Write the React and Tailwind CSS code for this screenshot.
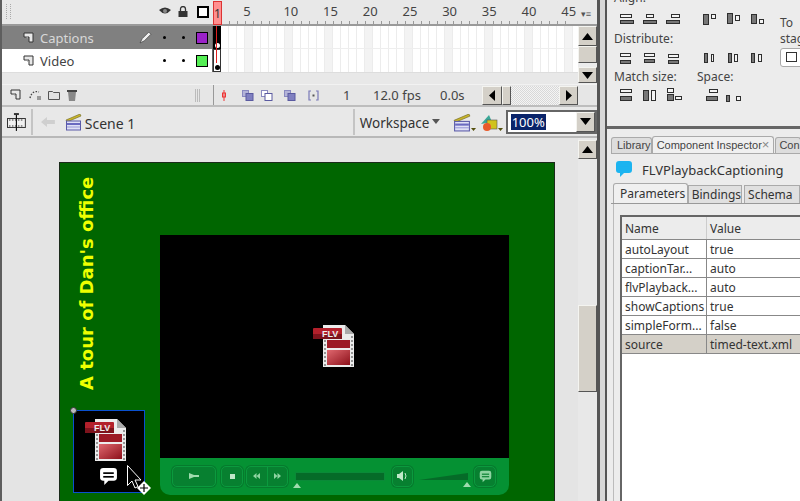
import React from "react";

const font = "font-['Noto_Sans',sans-serif]";

const Layer = () => (
  <svg width="12" height="12" viewBox="0 0 12 12" className="shrink-0">
    <path d="M1 1h9v9H6V5H1z" fill="#e8e8e8" stroke="#333" strokeWidth="1" />
    <path d="M2 4h3v3" fill="#999" />
  </svg>
);

// bevelled win98 style button
const Bevel = ({ className = "", children }) => (
  <div className={`flex items-center justify-center bg-[#d4d0c8] border border-t-[#f4f4f0] border-l-[#f4f4f0] border-r-[#555] border-b-[#555] ${className}`}>
    {children}
  </div>
);

const Tri = ({ dir }) => {
  const d = { up: "M0 7L5.5 0L11 7z", down: "M0 0L11 0L5.5 7z" }[dir];
  if (dir === "left") return <svg width="6" height="11" viewBox="0 0 6 11"><path d="M6 0V11L0 5.5z" fill="#000" /></svg>;
  if (dir === "right") return <svg width="6" height="11" viewBox="0 0 6 11"><path d="M0 0V11L6 5.5z" fill="#000" /></svg>;
  return <svg width="11" height="7" viewBox="0 0 11 7"><path d={d} fill="#000" /></svg>;
};

const Clapper = ({ size = 17 }) => (
  <svg width={size} height={size} viewBox="0 0 17 17">
    <path d="M1 6L15 0l1 2L2 8z" fill="#c9b52a" stroke="#6c6420" strokeWidth=".6" />
    <rect x="1.5" y="7" width="14" height="9" fill="#dfe0f5" stroke="#5a5aa8" />
    <rect x="2" y="9" width="13" height="2" fill="#6a6ac0" />
    <rect x="2" y="12.5" width="13" height="1" fill="#9a9ad8" />
  </svg>
);

const Onion = ({ outline, fill }) => (
  <svg width="12" height="11" viewBox="0 0 12 11">
    <rect x=".5" y=".5" width="6" height="6" fill={fill ? "#b4b4d8" : "#fff"} stroke="#8a8ac0" />
    <rect x="4" y="3.5" width="7" height="7" fill={outline ? "#fff" : "#8080c0"} stroke="#5a5aa0" />
  </svg>
);

// little align glyphs: list of [x, y, w, h, filled]
const Glyph = ({ r, w = 16 }) => (
  <svg width={w} height="14" viewBox={`0 0 ${w} 14`} className="shrink-0">
    {r.map(([x, y, rw, rh, f], i) => (
      <rect key={i} x={x + 0.5} y={y + 0.5} width={rw} height={rh} fill={f ? "#777" : "#f4f4f4"} stroke="#2e2e2e" strokeWidth="1" />
    ))}
  </svg>
);

const alignRows = [
  [
    [[0, 0, 0, 13], [2, 2, 11, 3], [2, 8, 13, 3, 1]],
    [[7, 0, 0, 13], [4, 2, 7, 3], [1, 8, 13, 3, 1]],
    [[15, 0, 0, 13], [5, 2, 8, 3], [0, 8, 13, 3, 1]],
    [[0, 0, 15, 0], [2, 2, 5, 10, 1], [10, 2, 4, 4]],
    [[0, 6, 15, 0], [2, 1, 5, 10, 1], [10, 3, 4, 5]],
    [[0, 13, 15, 0], [2, 2, 5, 9, 1], [10, 7, 4, 4]],
  ],
  [
    [[0, 0, 14, 0], [2, 2, 10, 3], [0, 7, 14, 0], [2, 9, 10, 3, 1]],
    [[2, 2, 10, 3], [0, 6, 14, 0], [2, 8, 10, 3, 1], [0, 12, 14, 0]],
    [[2, 3, 10, 3], [0, 7, 14, 0], [2, 9, 10, 3, 1], [0, 13, 14, 0]],
    [[1, 1, 0, 12], [3, 2, 3, 9, 1], [8, 1, 0, 12], [10, 3, 2, 7]],
    [[3, 2, 3, 9, 1], [7, 1, 0, 12], [9, 3, 3, 7], [13, 1, 0, 12]],
    [[2, 2, 3, 9, 1], [7, 1, 0, 12], [9, 3, 3, 7], [13, 1, 0, 12]],
  ],
  [
    [[0, 0, 0, 13], [15, 0, 0, 13], [2, 1, 11, 3], [2, 8, 11, 4, 1]],
    [[0, 0, 14, 0], [1, 2, 5, 10, 1], [9, 2, 4, 10], [0, 13, 14, 0]],
    [[1, 0, 6, 4], [1, 6, 6, 6, 1], [9, 8, 6, 3]],
    [[0, 5, 15, 0], [7, 1, 8, 3], [4, 8, 11, 4, 1]],
    [[4, 0, 0, 14], [0, 7, 3, 6, 1], [9, 0, 0, 14], [10, 8, 4, 4]],
  ],
];

const FlvIcon = ({ w, h, id }) => (
  <svg width={w} height={h} viewBox="0 0 44 44">
    <defs>
      <linearGradient id={id} x1="0" y1="0" x2="1" y2="1">
        <stop offset="0" stopColor="#e0686f" />
        <stop offset="1" stopColor="#8c101a" />
      </linearGradient>
    </defs>
    <path d="M10 1h22l9 9v33H10z" fill="#ececec" />
    <path d="M32 1v9h9z" fill="#aaa" />
    <rect x="14" y="16" width="23" height="8" fill="#9c1a25" />
    <rect x="14" y="26" width="23" height="15" fill={`url(#${id})`} />
    <path d="M12 12v30M39 12v30" stroke="#777" strokeWidth="1.5" strokeDasharray="2 2" />
    <rect x="0" y="4" width="29" height="11" rx="1" fill="#b3202b" />
    <rect x="0" y="10" width="29" height="5" fill="#7e131c" />
    <text x="9" y="13" fontSize="9" fontWeight="700" fill="#eee" fontFamily="Liberation Sans">FLV</text>
  </svg>
);

const Bubble = ({ w, h, fill, line }) => (
  <svg width={w} height={h} viewBox="0 0 18 18">
    <path d="M4 1h10a3 3 0 0 1 3 3v6a3 3 0 0 1-3 3H9l-4 4v-4H4a3 3 0 0 1-3-3V4a3 3 0 0 1 3-3z" fill={fill} />
    <rect x="4" y="5" width="10" height="1.6" fill={line} />
    <rect x="4" y="8.5" width="10" height="1.6" fill={line} />
  </svg>
);

const CtlBtn = ({ className = "", children }) => (
  <div className={`flex items-center justify-center h-[21px] rounded-[5px] bg-[#078030] border border-[#0b9a3e] shadow-[0_0_0_1px_#067a2d] ${className}`}>
    {children}
  </div>
);

const FrameRow = ({ last }) => (
  <div className={`flex h-[23px] bg-white ${last ? "" : "border-b border-[#eee]"}`}>
    <div className="w-[8px] shrink-0" />
    {Array.from({ length: 45 }).map((_, i) => (
      <div key={i} className={`w-[8px] shrink-0 border-r border-[#ececec] ${(i + 2) % 5 === 0 ? "bg-[#f3f3f3]" : ""}`} />
    ))}
  </div>
);

const Drop = () => (
  <svg width="5" height="3" viewBox="0 0 5 3" className="self-end mb-[1px]"><path d="M0 0h5L2.500 3z" fill="#55500f" /></svg>
);

const rows = [
  ["autoLayout", "true"],
  ["captionTar...", "auto"],
  ["flvPlayback...", "auto"],
  ["showCaptions", "true"],
  ["simpleForm...", "false"],
  ["source", "timed-text.xml"],
];

export default function App() {
  const nums = [10, 15, 20, 25, 30, 35, 40, 45];
  return (
    <div className={`w-[800px] h-[501px] overflow-hidden flex text-[12px] text-[#333] bg-[#e8e8e8] ${font}`}>
      {/* main column */}
      <div className="w-[597px] shrink-0 flex flex-col border-l-2 border-[#5e5e5e]">
        {/* timeline */}
        <div className="h-[107px] shrink-0 flex flex-col border-b-2 border-[#bdbdbd]">
          <div className="relative h-[26px] shrink-0 flex border-b-2 border-[#9a9a9a]">
            <div className="w-[211px] shrink-0 flex items-center pl-[4px] pb-[1px]">
              <div className="w-[5px] h-[15px] border-x border-dotted border-[#aaa]" />
              <svg width="12" height="9" viewBox="0 0 12 9" className="ml-[148px]"><path d="M0 3Q6-2 12 3Q6 10 0 3z" fill="#333" /><circle cx="6" cy="4" r="2" fill="#888" /></svg>
              <svg width="10" height="11" viewBox="0 0 9 11" className="ml-[7px]"><path d="M2 5V3a2.500 2.500 0 0 1 5 0v2" fill="none" stroke="#333" strokeWidth="1.3" /><rect x="0" y="5" width="9" height="6" fill="#333" /></svg>
              <div className="ml-[9px] w-[12px] h-[12px] border-2 border-black bg-white" />
            </div>
            <div className="relative flex-1 text-[13px] text-[#444]">
              <div className="flex pl-[10px] pt-[3px] leading-[16px]">
                <span className="w-[48px] text-center">5</span>
                {nums.map((n) => <span key={n} className="w-[39.7px] text-center shrink-0">{n}</span>)}
              </div>
              <div className="absolute left-0 right-[24px] bottom-0 h-[3px] bg-[repeating-linear-gradient(90deg,#999_0,#999_1px,transparent_1px,transparent_8px)]" />
              <div className="absolute right-[6px] top-[9px] text-[9px] leading-[9px] text-[#555]">▾≡</div>
            </div>
            <div className="absolute left-[211px] top-[1px] w-[9px] h-[24px] bg-[#ff8f8f] border border-[#d33] text-center text-[12px] leading-[24px] text-[#333]">1</div>
          </div>

          <div className="relative flex flex-1 min-h-0">
            <div className="w-[576px] shrink-0 flex flex-col">
              {/* Captions */}
              <div className="flex h-[23px] shrink-0">
                <div className="w-[210px] shrink-0 flex items-center bg-[#808080] text-[#d8d8d8] pl-[21px]">
                  <Layer />
                  <span className="ml-[5px] w-[100px] text-[13px] pt-[2px]">Captions</span>
                  <svg width="13" height="13" viewBox="0 0 12 12" className="-ml-[1px]"><path d="M1 11l2-4 6-6 2 2-6 6z" fill="#eee" stroke="#333" strokeWidth=".6" /></svg>
                  <div className="ml-[11px] w-[3px] h-[3px] rounded-full bg-black" />
                  <div className="ml-[16px] w-[3px] h-[3px] rounded-full bg-black" />
                  <div className="ml-[11px] w-[12px] h-[12px] bg-[#9a22c8] border border-black" />
                </div>
                <div className="w-[1px] bg-[#666]" />
                <div className="relative flex-1 overflow-hidden"><FrameRow /></div>
              </div>
              {/* Video */}
              <div className="flex h-[23px] shrink-0">
                <div className="w-[210px] shrink-0 flex items-center bg-white text-[#444] pl-[21px]">
                  <Layer />
                  <span className="ml-[5px] w-[100px] text-[13px] pt-[2px]">Video</span>
                  <div className="ml-[23px] w-[3px] h-[3px] rounded-full bg-black" />
                  <div className="ml-[16px] w-[3px] h-[3px] rounded-full bg-black" />
                  <div className="ml-[11px] w-[12px] h-[12px] bg-[#55ee55] border border-black" />
                </div>
                <div className="w-[1px] bg-[#666]" />
                <div className="relative flex-1 overflow-hidden"><FrameRow last /></div>
              </div>
              <div className="flex-1 border-t border-[#ddd]" />
            </div>
            {/* first keyframes and playhead, over the frame grid */}
            <div className="absolute left-[211px] top-0 w-[8px] h-[23px] bg-black flex items-end justify-center pb-[1px]">
              <div className="w-[5px] h-[5px] rounded-full bg-white" />
            </div>
            <div className="absolute left-[211px] top-[23px] w-[8px] h-[23px] bg-white border border-[#333] flex items-end justify-center pb-[1px]">
              <div className="w-[5px] h-[5px] rounded-full bg-black" />
            </div>
            <div className="absolute left-[214px] top-0 bottom-[21px] w-px bg-[#e02020]" />
            <div className="w-[19px] shrink-0 flex flex-col bg-[#ececec]">
              <Bevel className="h-[20px]"><Tri dir="up" /></Bevel>
              <Bevel className="h-[17px]" />
              <div className="h-[4px]" />
              <Bevel className="h-[16px]"><Tri dir="down" /></Bevel>
            </div>
          </div>

          {/* timeline footer */}
          <div className="h-[21px] shrink-0 flex items-center border-t border-[#f2f2f2] bg-[#e6e6e6] text-[#444] text-[13px]">
            <div className="w-[211px] shrink-0 flex items-center gap-[7px] pl-[8px]">
              <Layer />
              <svg width="12" height="12" viewBox="0 0 12 12"><path d="M1 9Q3 1 10 3" fill="none" stroke="#444" strokeWidth="1.4" strokeDasharray="1.5 1.5" /><rect x="8" y="7" width="4" height="4" fill="#999" /></svg>
              <svg width="12" height="10" viewBox="0 0 12 10"><path d="M.5 1.500h4l1 1h6v7H.5z" fill="#e2e2e2" stroke="#555" /></svg>
              <svg width="10" height="12" viewBox="0 0 10 12"><path d="M1 3h8l-1 9H2z" fill="#888" /><rect x="0" y="1" width="10" height="2" fill="#444" /></svg>
              <div className="ml-[111px] w-[5px] h-[13px] bg-[repeating-linear-gradient(90deg,#bbb_0,#bbb_1px,transparent_1px,transparent_2px)]" />
            </div>
            <div className="w-[1px] h-full bg-[#999]" />
            <svg width="4" height="11" viewBox="0 0 4 11" className="ml-[8px]"><path d="M2 0v11" stroke="#e33" /><rect x=".5" y="3" width="3" height="4" fill="none" stroke="#e33" /></svg>
            <div className="ml-[16px]"><Onion fill /></div>
            <div className="ml-[7px]"><Onion outline /></div>
            <div className="ml-[11px]"><Onion fill /></div>
            <svg width="11" height="11" viewBox="0 0 11 11" className="ml-[12px]"><path d="M3 1H1v9h2M8 1h2v9H8" fill="none" stroke="#7a7ab8" strokeWidth="1.2" /><rect x="4.500" y="4.500" width="2" height="2" fill="#555" /></svg>
            <span className="ml-[24px] pt-[1px] w-[8px]">1</span>
            <span className="ml-[22px] pt-[1px] w-[46px] whitespace-nowrap">12.0 fps</span>
            <span className="ml-[21px] pt-[1px] w-[26px]">0.0s</span>
            <div className="ml-[16px] flex h-[19px] w-[96px]">
              <Bevel className="w-[20px]"><Tri dir="left" /></Bevel>
              <Bevel className="w-[9px]" />
              <div className="flex-1 bg-[repeating-conic-gradient(#d8d8d8_0_25%,#f4f4f4_0_50%)] bg-[length:2px_2px]" />
              <Bevel className="w-[19px]"><Tri dir="right" /></Bevel>
            </div>
          </div>
        </div>

        {/* edit bar */}
        <div className="h-[31px] shrink-0 flex items-center border-b-2 border-[#b8b8b8] text-[#333] text-[14px]">
          <svg width="19" height="20" viewBox="0 0 19 20" className="ml-[5px]">
            <rect x=".5" y="6.500" width="18" height="9" fill="#f0f0f0" stroke="#333" />
            <path d="M2 8h15M2 14h15" stroke="#333" strokeDasharray="1.5 1.5" />
            <path d="M9.500 2v17" stroke="#111" strokeWidth="1.2" />
            <rect x="7" y="1" width="5" height="2" fill="#333" />
          </svg>
          <div className="ml-[5px] w-[2px] h-[26px] bg-[#c4c4c4]" />
          <svg width="14" height="10" viewBox="0 0 14 10" className="ml-[8px]"><path d="M0 5L6 0v3h8v4H6v3z" fill="#cfcfcf" /></svg>
          <div className="ml-[10px] mt-[1px]"><Clapper /></div>
          <span className="ml-[3px] w-[268px] shrink-0 pt-[3px]">Scene 1</span>
          <div className="w-[2px] h-[26px] bg-[#c4c4c4]" />
          <span className="ml-[5px] w-[69px] pt-[3px] text-[13.5px]">Workspace</span>
          <svg width="8" height="5" viewBox="0 0 8 5" className="ml-[3px]"><path d="M0 0h8L4 5z" fill="#555" /></svg>
          <div className="ml-[13px] flex h-[18px] mt-[2px]"><Clapper size={18} /><Drop /></div>
          <div className="ml-[4px] flex h-[18px] mt-[2px]">
            <svg width="18" height="18" viewBox="0 0 18 18">
              <path d="M1 10L9 1l3 7z" fill="#3aa898" />
              <rect x="7" y="6" width="10" height="9" fill="#d0c21e" stroke="#555" strokeWidth=".6" />
              <circle cx="7" cy="13" r="4" fill="#e85a2a" />
            </svg>
            <Drop />
          </div>
          <div className="ml-[3px] w-[92px] h-[24px] flex items-center bg-white border-2 border-[#666] pl-[3px] text-[13px]">
            <span className="bg-[#0a246a] text-white h-[16px] leading-[16px] px-px">100%</span>
            <Bevel className="ml-auto w-[19px] h-[20px]"><Tri dir="down" /></Bevel>
          </div>
        </div>

        {/* stage */}
        <div className="relative flex-1 min-h-0 overflow-hidden bg-[#e4e4e4]">
          {/* document */}
          <div className="absolute left-[57px] top-[24px] w-[496px] h-[345px] bg-[#006600] border border-[#1a2a1a]">
            <div className="absolute left-[16px] top-[14px] h-[213px] flex justify-center [writing-mode:vertical-rl] rotate-180 text-[#eeff00] text-[18px] font-['DejaVu_Sans',sans-serif] font-bold leading-[22px] whitespace-nowrap">
              A tour of Dan's office
            </div>
            <div className="absolute left-[100px] top-[72px] w-[349px] h-[260px] flex flex-col">
              <div className="h-[223px] shrink-0 bg-black flex items-center justify-center">
                <div className="-mt-[2px] ml-[1px]"><FlvIcon w={44} h={44} id="flv-a" /></div>
              </div>
              <div className="flex-1 bg-[#059133] rounded-b-[10px] flex items-center pl-[12px] pb-[1px]">
                <CtlBtn className="w-[44px]">
                  <svg width="10" height="6" viewBox="0 0 10 6"><path d="M0 0l5 2h5v2H5L0 6z" fill="#9fdcae" /></svg>
                </CtlBtn>
                <CtlBtn className="ml-[5px] w-[22px]"><div className="w-[5px] h-[5px] bg-[#bfe8c8]" /></CtlBtn>
                <CtlBtn className="ml-[3px] w-[42px]">
                  <div className="flex-1 h-full flex items-center justify-center border-r border-[#0b9a3e]">
                    <svg width="7" height="6" viewBox="0 0 7 6"><path d="M3.500 0v6L0 3zM7 0v6L3.500 3z" fill="#8fd4a2" /></svg>
                  </div>
                  <div className="flex-1 h-full flex items-center justify-center">
                    <svg width="7" height="6" viewBox="0 0 7 6"><path d="M0 0v6l3.500-3zM3.500 0v6L7 3z" fill="#8fd4a2" /></svg>
                  </div>
                </CtlBtn>
                <div className="relative ml-[7px] w-[90px] h-[9px] bg-[#056b28] border border-[#0a8a38]">
                  <div className="absolute -left-[3px] top-[10px] w-0 h-0 border-x-[4px] border-x-transparent border-b-[5px] border-b-[#9fdcae]" />
                </div>
                <CtlBtn className="ml-[7px] w-[21px]">
                  <svg width="12" height="12" viewBox="0 0 12 12"><path d="M0 4h2l4-3v10L2 8H0z" fill="#bfe8c8" /><path d="M8 3q2 3 0 6" fill="none" stroke="#bfe8c8" /></svg>
                </CtlBtn>
                <div className="relative ml-[6px] w-[49px] h-[9px]">
                  <svg width="49" height="9" viewBox="0 0 49 9" className="block"><path d="M0 8L49 1v7z" fill="#056b28" /></svg>
                  <div className="absolute right-[-3px] top-[10px] w-0 h-0 border-x-[4px] border-x-transparent border-b-[5px] border-b-[#9fdcae]" />
                </div>
                <CtlBtn className="ml-[6px] w-[22px]"><Bubble w={13} h={13} fill="#8fd4a2" line="#078030" /></CtlBtn>
              </div>
            </div>
            {/* selected component */}
            <div className="absolute left-[13px] top-[247px] w-[72px] h-[83px] bg-black border border-[#0a50d0] flex flex-col items-center pt-[7px]">
              <div className="-ml-[4px]"><FlvIcon w={44} h={44} id="flv-b" /></div>
              <div className="mt-[5px] -ml-[2px]"><Bubble w={19} h={19} fill="#fff" line="#000" /></div>
              <div className="absolute -left-[4px] -top-[4px] w-[7px] h-[7px] rounded-full bg-[#bbb] border border-[#333]" />
            </div>
            {/* cursor */}
            <svg width="26" height="34" viewBox="0 0 26 34" className="absolute left-[67px] top-[302px]">
              <path d="M.5.500v20l4.500-4.500 3 7 3-1.500-3-6.500h6z" fill="#000" stroke="#fff" />
              <path d="M17 16l7 7-7 7-7-7z" fill="#fff" />
              <path d="M13 23h8M17 19v8" stroke="#000" strokeWidth="1.2" />
            </svg>
          </div>
          {/* stage scrollbar */}
          <div className="absolute right-0 top-0 bottom-0 w-[19px] flex flex-col bg-[#e8e8e8]">
            <Bevel className="h-[19px] mt-[2px]"><Tri dir="up" /></Bevel>
            <Bevel className="h-[87px] mt-[146px]" />
          </div>
        </div>
      </div>

      {/* splitter */}
      <div className="w-[10px] shrink-0 bg-[#d8d8d8] border-l-[3px] border-r-2 border-[#555]" />

      {/* right panels */}
      <div className="flex-1 min-w-0 flex flex-col overflow-hidden">
        <div className="relative h-[129px] shrink-0 bg-[#ececec] border-b-[3px] border-[#666] flex pl-[7px] text-[#444] text-[12px]">
          <div className="w-[160px] shrink-0 -mt-[9px]">
            <div className="leading-[14px]">Align:</div>
            <div className="flex mt-[7px] h-[14px] pl-[4px]">
              {alignRows[0].map((r, i) => <div key={i} className={i === 3 ? "w-[24px] ml-[11px]" : "w-[24px]"}><Glyph r={r} /></div>)}
            </div>
            <div className="mt-[6px] leading-[14px]">Distribute:</div>
            <div className="flex mt-[5px] pl-[4px]">
              {alignRows[1].map((r, i) => <div key={i} className={i === 3 ? "w-[24px] ml-[11px]" : "w-[24px]"}><Glyph r={r} /></div>)}
            </div>
            <div className="mt-[5px] flex leading-[14px]"><span className="w-[83px]">Match size:</span><span>Space:</span></div>
            <div className="flex mt-[4px] pl-[4px]">
              {alignRows[2].map((r, i) => <div key={i} className={i === 3 ? "w-[24px] ml-[12px]" : "w-[24px]"}><Glyph r={r} /></div>)}
            </div>
          </div>
          <div className="w-px h-[114px] mt-[8px] bg-[#999]" />
          <div className="pl-[6px] pt-[15px] leading-[16px] whitespace-nowrap">
            <div>To</div>
            <div>stage:</div>
            <div className="mt-[1px] w-[40px] h-[19px] border border-[#aaa] rounded-[3px] bg-white pl-[5px] pt-[3px]">
              <div className="w-[11px] h-[10px] border border-[#333]" />
            </div>
          </div>
        </div>

        <div className="flex-1 min-h-0 bg-[#ececec] flex flex-col pl-[4px] pt-[8px]">
          {/* panel tabs */}
          <div className="flex h-[17px] items-end text-[#444] text-[11px] font-['Liberation_Sans',sans-serif] whitespace-nowrap border-b border-[#aaa]">
            <div className="w-[45px] h-[16px] bg-[#ddd] border border-[#aaa] border-b-0 rounded-t-[3px] pl-[5px] leading-[15px]">Library</div>
            <div className="w-[126px] h-[17px] bg-[#f0f0f0] border border-[#aaa] border-b-0 rounded-t-[3px] pl-[4px] leading-[16px] flex">
              Component Inspector<span className="ml-auto pr-[4px] text-[#888] text-[13px]">×</span>
            </div>
            <div className="ml-px w-[40px] h-[16px] bg-[#ddd] border border-[#aaa] border-b-0 rounded-t-[3px] pl-[3px] leading-[15px]">Con</div>
          </div>
          {/* title */}
          <div className="flex items-center h-[30px] pl-[4px]">
            <Bubble w={18} h={18} fill="#1cb4f0" line="#1cb4f0" />
            <span className="ml-[9px] text-[13px] text-[#333] whitespace-nowrap pt-[3px]">FLVPlaybackCaptioning</span>
          </div>
          {/* inner tabs */}
          <div className="flex h-[20px] items-end text-[#333] text-[12px] whitespace-nowrap border-b border-[#999]">
            <div className="ml-[2px] w-[80px] h-[20px] bg-[#f0f0f0] border border-[#aaa] border-b-0 rounded-t-[3px] pl-[6px] leading-[19px]">Parameters</div>
            <div className="w-[58px] h-[18px] bg-[#e0e0e0] border border-[#aaa] border-b-0 pl-[3px] leading-[17px]">Bindings</div>
            <div className="ml-[2px] w-[60px] h-[18px] bg-[#e0e0e0] border border-[#aaa] border-b-0 pl-[3px] leading-[17px]">Schema</div>
          </div>
          {/* table */}
          <div className="flex-1 min-h-0 ml-[2px] pl-[6px] pt-[11px] border-l border-[#bbb]">
            <div className="h-full bg-white border-l-2 border-t-2 border-[#666] text-[#333] text-[12px]">
              <div className="flex h-[23px] bg-[#ececec] border-b border-[#888] leading-[23px]">
                <div className="w-[85px] shrink-0 pl-[3px] border-r border-[#ccc]">Name</div>
                <div className="pl-[3px]">Value</div>
              </div>
              {rows.map(([n, v]) => (
                <div key={n} className={`flex h-[19px] border-b border-[#888] leading-[19px] whitespace-nowrap ${n === "source" ? "bg-[#d4d0c8]" : ""}`}>
                  <div className="w-[85px] shrink-0 pl-[3px] border-r border-[#888] overflow-hidden">{n}</div>
                  <div className="pl-[3px]">{v}</div>
                </div>
              ))}
            </div>
          </div>
        </div>
      </div>
    </div>
  );
}
